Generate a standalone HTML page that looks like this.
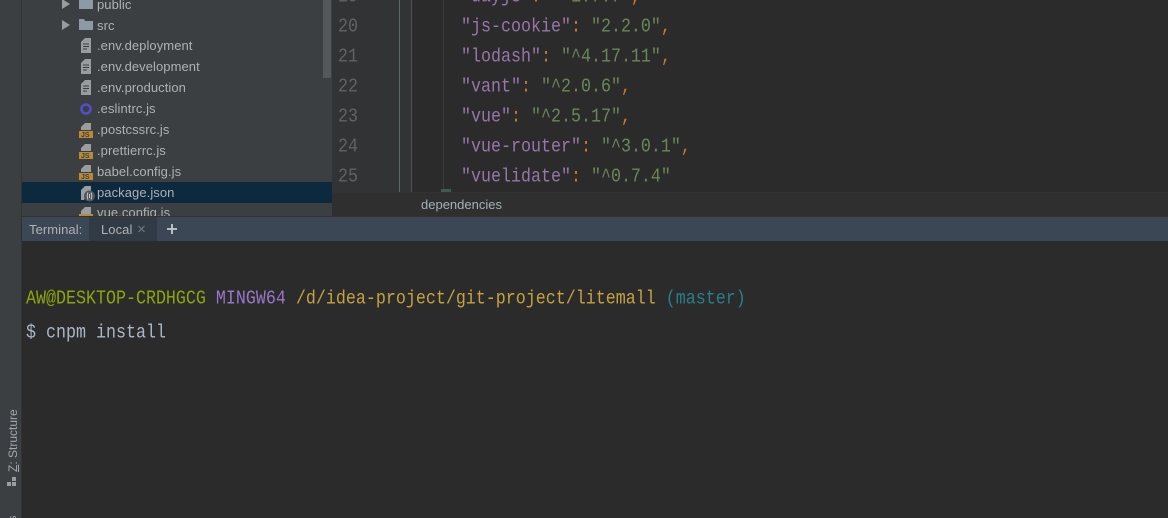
<!DOCTYPE html>
<html><head><meta charset="utf-8">
<style>
html,body{margin:0;padding:0;width:1168px;height:518px;overflow:hidden;background:#2b2b2b}
#r{position:absolute;left:0;top:0;width:1168px;height:518px;overflow:hidden}
div,span{position:absolute}
span.c{position:static}
.t{font:13px/21px "Liberation Sans",sans-serif;color:#afb1b3;left:97px;white-space:nowrap;letter-spacing:.07px}
.m{font:16.67px/30px "Liberation Mono",monospace;white-space:pre;left:461px;color:#9876aa;transform:scaleY(1.16);transform-origin:0 50%}
.n{font:16.67px/30px "Liberation Mono",monospace;left:338px;color:#606366;white-space:pre;transform:scaleY(1.16);transform-origin:0 50%}
.o{color:#cc7832}.s{color:#6a8759}
svg{position:absolute}
</style></head><body><div id="r">
<div style="left:0;top:0;width:21px;height:518px;background:#3c3f41"></div>
<div style="left:21px;top:0;width:1px;height:518px;background:#323232"></div>
<div style="left:22px;top:0;width:310px;height:217px;background:#3c3f41;overflow:hidden">
<div style="left:0;top:182px;width:310px;height:21px;background:#0d293e"></div>
<div style="left:301px;top:0;width:8px;height:78px;background:#55585a"></div>
</div>
<div class="t" style="top:-6px">public</div>
<div class="t" style="top:15px">src</div>
<div class="t" style="top:35px">.env.deployment</div>
<div class="t" style="top:56px">.env.development</div>
<div class="t" style="top:77px">.env.production</div>
<div class="t" style="top:98px">.eslintrc.js</div>
<div class="t" style="top:119px">.postcssrc.js</div>
<div class="t" style="top:140px">.prettierrc.js</div>
<div class="t" style="top:161px">babel.config.js</div>
<div class="t" style="top:182px">package.json</div>
<div style="left:22px;top:203px;width:310px;height:13px;overflow:hidden"><div class="t" style="left:75px;top:-1px">vue.config.js</div></div>
<svg width="332" height="217" style="left:0;top:0" viewBox="0 0 332 217">
<g fill="#9a9da0"><path d="M62 -1l8 5-8 5z"/><path d="M62 20l8 5-8 5z"/></g>
<g fill="#8c9aa5"><path d="M79 -3h14v12h-14z"/><path d="M79 19h5l1 2h8v9h-14z"/></g>
<g><path d="M85 38h6v15h-10v-11z" fill="#9a9da0"/><path d="M83 44h6M83 46.500h6M83 49h4" stroke="#3c3f41"/></g>
<g transform="translate(0,21)"><path d="M85 38h6v15h-10v-11z" fill="#9a9da0"/><path d="M83 44h6M83 46.500h6M83 49h4" stroke="#3c3f41"/></g>
<g transform="translate(0,42)"><path d="M85 38h6v15h-10v-11z" fill="#9a9da0"/><path d="M83 44h6M83 46.500h6M83 49h4" stroke="#3c3f41"/></g>
<circle cx="86" cy="109" r="4.500" fill="none" stroke="#4f4fc8" stroke-width="2.600"/>
<g><path d="M85 123h6v7h-10v-3z" fill="#9a9da0"/><rect x="79" y="131" width="14" height="7" fill="#b98a36"/><text x="81" y="137" font-family="Liberation Sans,sans-serif" font-size="7" font-weight="bold" fill="#3c3f41">JS</text></g>
<g transform="translate(0,21)"><path d="M85 123h6v7h-10v-3z" fill="#9a9da0"/><rect x="79" y="131" width="14" height="7" fill="#b98a36"/><text x="81" y="137" font-family="Liberation Sans,sans-serif" font-size="7" font-weight="bold" fill="#3c3f41">JS</text></g>
<g transform="translate(0,42)"><path d="M85 123h6v7h-10v-3z" fill="#9a9da0"/><rect x="79" y="131" width="14" height="7" fill="#b98a36"/><text x="81" y="137" font-family="Liberation Sans,sans-serif" font-size="7" font-weight="bold" fill="#3c3f41">JS</text></g>
<path d="M85 186h6v8h-4l-3 6h-3v-10z" fill="#9a9da0"/>
<circle cx="89.500" cy="196" r="5.500" fill="#50565a"/>
<path d="M88 192.500q-1.500 3.500 0 7M91 192.500q1.500 3.500 0 7M89.500 194v4" stroke="#c5c8ca" fill="none"/>
<path d="M85 207h6v7h-10v-3z" fill="#9a9da0"/><rect x="79" y="214" width="14" height="3" fill="#b98a36"/>
</svg>
<div style="left:332px;top:0;width:836px;height:192px;background:#2b2b2b"></div>
<div style="left:332px;top:0;width:79px;height:192px;background:#313335"></div>
<div style="left:399px;top:0;width:1px;height:192px;background:#4f6f68"></div>
<div style="left:411px;top:0;width:1px;height:192px;background:#505254"></div>
<div style="left:443px;top:0;width:1px;height:192px;background:#3b3b3b"></div>
<div style="left:441px;top:189px;width:10px;height:3px;background:#3f5a52"></div>
<div class="n" style="top:-17px">19</div>
<div class="n" style="top:13px">20</div>
<div class="n" style="top:43px">21</div>
<div class="n" style="top:73px">22</div>
<div class="n" style="top:103px">23</div>
<div class="n" style="top:133px">24</div>
<div class="n" style="top:163px">25</div>
<div class="m" style="top:-17px">"dayjs"<span class="c o">:</span> <span class="c s">"^1.7.7"</span><span class="c o">,</span></div>
<div class="m" style="top:13px">"js-cookie"<span class="c o">:</span> <span class="c s">"2.2.0"</span><span class="c o">,</span></div>
<div class="m" style="top:43px">"lodash"<span class="c o">:</span> <span class="c s">"^4.17.11"</span><span class="c o">,</span></div>
<div class="m" style="top:73px">"vant"<span class="c o">:</span> <span class="c s">"^2.0.6"</span><span class="c o">,</span></div>
<div class="m" style="top:103px">"vue"<span class="c o">:</span> <span class="c s">"^2.5.17"</span><span class="c o">,</span></div>
<div class="m" style="top:133px">"vue-router"<span class="c o">:</span> <span class="c s">"^3.0.1"</span><span class="c o">,</span></div>
<div class="m" style="top:163px">"vuelidate"<span class="c o">:</span> <span class="c s">"^0.7.4"</span></div>
<div style="left:332px;top:192px;width:836px;height:24px;background:#2f2f2f;border-top:1px solid #323232;box-sizing:border-box"></div>
<div class="t" style="left:421px;top:194px;color:#a4b1b8;letter-spacing:0">dependencies</div>
<div style="left:22px;top:216px;width:1146px;height:1px;background:#323232"></div>
<div style="left:22px;top:217px;width:1146px;height:24px;background:#3b4754"></div>
<div style="left:89px;top:217px;width:68px;height:24px;background:#313b46"></div>
<div class="t" style="left:29px;top:219px;color:#afb1b3">Terminal:</div>
<div class="t" style="left:101px;top:219px;color:#afb1b3">Local</div>
<svg width="50" height="24" style="left:130px;top:217px" viewBox="0 0 50 24">
<path d="M8.500 9l6 6M14.500 9l-6 6" stroke="#6e7780" stroke-width="1.200"/>
<path d="M42 7v10M37 12h10" stroke="#c5cacf" stroke-width="1.800"/>
</svg>
<div class="m" style="left:26px;top:285px;color:#8ca509">AW@DESKTOP-CRDHGCG <span class="c" style="color:#9876c8">MINGW64</span> <span class="c" style="color:#c6a33f">/d/idea-project/git-project/litemall</span> <span class="c" style="color:#25808c">(master)</span></div>
<div class="m" style="left:26px;top:319px;color:#a9b7c6">$ cnpm install</div>
<div style="left:-27px;top:422px;width:80px;height:20px;transform:rotate(-90deg);font:12px/20px 'Liberation Sans',sans-serif;color:#a0a8ae;white-space:nowrap;text-align:left"><span class="c" style="text-decoration:underline">Z</span>: Structure</div>
<svg width="16" height="16" style="left:6px;top:476px" viewBox="0 0 16 16"><path d="M1 6h4v4h-4zM6 6h4v4h-4zM6 1h4v4h-4z" fill="#9a9da0"/></svg>
<div style="left:3px;top:507px;width:20px;height:14px;transform:rotate(-90deg);font:11px/14px 'Liberation Sans',sans-serif;color:#a0a8ae">ts</div>
</div></body></html>
